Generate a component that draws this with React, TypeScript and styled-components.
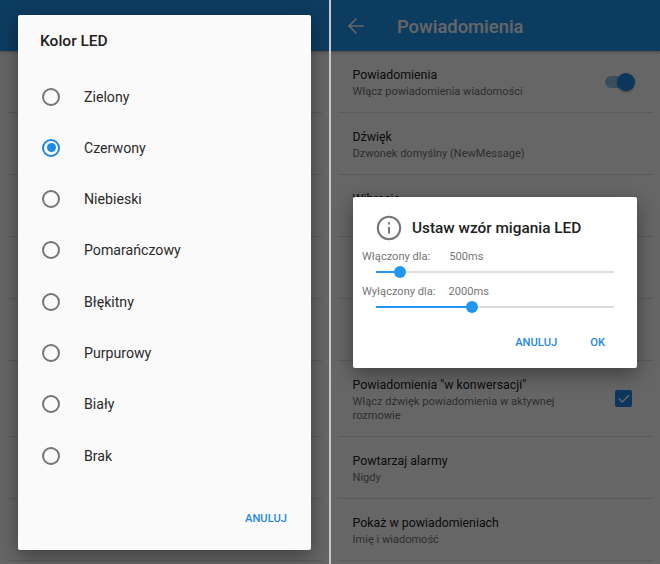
import styled, { createGlobalStyle } from 'styled-components';
import { ArrowLeft, Check } from 'lucide-react';

const GlobalStyle = createGlobalStyle`
    html, body {
        margin: 0;
        padding: 0;
        background: #c8c8c8;
    }
    body {
        font-family: Roboto, "Noto Sans", sans-serif;
    }
`;

const Page = styled.div`
    display: flex;
    gap: 2px;
    width: 660px;
    height: 564px;
    overflow: hidden;
`;

const Screen = styled.div`
    position: relative;
    flex: none;
    width: 329px;
    height: 564px;
    overflow: hidden;
    background: #fff;
`;

const AppBar = styled.header`
    display: flex;
    align-items: center;
    height: 51px;
    padding: 1px 0 0 13px;
    box-sizing: border-box;
    gap: 29px;
    background: #2196f3;
    color: #fff;
    box-shadow: 0 1px 3px rgba(0, 0, 0, 0.3);
`;

const BarTitle = styled.h1`
    margin: 0;
    font-size: 18.4px;
    font-weight: 500;
`;

const Row = styled.div<{ $tall?: boolean }>`
    display: flex;
    align-items: center;
    justify-content: space-between;
    box-sizing: border-box;
    height: ${({ $tall }) => ($tall ? 76 : 62)}px;
    margin: 0 7px;
    padding: 4px 14px 0 14.5px;
    border-bottom: 1px solid #e0e0e0;
`;

const RowText = styled.div`
    display: flex;
    flex-direction: column;
    gap: 2px;
    width: 225px;
`;

const RowTitle = styled.div`
    font-size: 12.35px;
    line-height: 15px;
    color: #212121;
`;

const RowSub = styled.div`
    font-size: 11.05px;
    line-height: 14px;
    color: #757575;
`;

const Toggle = styled.div`
    position: relative;
    top: -2px;
    width: 29px;
    height: 12px;
    margin-right: 5px;
    border-radius: 6px;
    background: #8cc4f2;
    &::after {
        content: '';
        position: absolute;
        top: -3px;
        right: -1px;
        width: 18px;
        height: 18px;
        border-radius: 50%;
        background: #1e88e5;
        box-shadow: 0 1px 2px rgba(0, 0, 0, 0.4);
    }
`;

const CheckBox = styled.div`
    display: flex;
    align-items: center;
    justify-content: center;
    width: 17px;
    height: 17px;
    margin: -4px 7px 0 0;
    border-radius: 2px;
    background: #1e88e5;
    color: #fff;
`;

const Scrim = styled.div`
    position: absolute;
    inset: 0;
    display: flex;
    align-items: center;
    justify-content: center;
    background: rgba(0, 0, 0, 0.6);
`;

const Dialog = styled.div<{ $width: number; $height: number; $surface: string; $nudge?: boolean }>`
    display: flex;
    flex-direction: column;
    box-sizing: border-box;
    width: ${({ $width }) => $width}px;
    height: ${({ $height }) => $height}px;
    margin-right: ${({ $nudge }) => ($nudge ? 1 : 0)}px;
    border-radius: 2px;
    background: ${({ $surface }) => $surface};
    box-shadow: 0 6px 20px rgba(0, 0, 0, 0.4);
`;

const DialogTitle = styled.h2`
    margin: 16px 0 0 22px;
    font-size: 15.5px;
    line-height: 20px;
    font-weight: 500;
    color: #212121;
`;

const RadioList = styled.div`
    display: flex;
    flex-direction: column;
    flex: 1;
    margin-top: 20.4px;
`;

const RadioRow = styled.div`
    display: flex;
    align-items: center;
    flex: none;
    height: 51.3px;
    padding-left: 24px;
    gap: 24px;
    font-size: 14.15px;
    color: #2b2b2b;
`;

const RadioMark = styled.span<{ $on?: boolean }>`
    display: flex;
    align-items: center;
    justify-content: center;
    box-sizing: border-box;
    width: 18px;
    height: 18px;
    border-radius: 50%;
    border: 2px solid ${({ $on }) => ($on ? '#1e88e5' : '#757575')};
    &::after {
        content: '';
        display: ${({ $on }) => ($on ? 'block' : 'none')};
        width: 9px;
        height: 9px;
        border-radius: 50%;
        background: #1e88e5;
    }
`;

const Actions = styled.div`
    display: flex;
    justify-content: flex-end;
    gap: 33px;
    padding: 0 24px 24px 0;
`;

const LedActions = styled(Actions)`
    margin-top: auto;
    padding: 0 32px 18px 0;
`;

const ActionButton = styled.button`
    padding: 0;
    border: 0;
    background: none;
    font-family: inherit;
    font-size: 11.2px;
    line-height: 14px;
    font-weight: 500;
    color: #1e88e5;
`;

const LedHead = styled.div`
    display: flex;
    align-items: center;
    gap: 10px;
    margin: 18px 0 0 23px;
    font-size: 15.35px;
    font-weight: 500;
    color: #212121;
`;

const LedLabel = styled.div<{ $gap: number }>`
    display: flex;
    gap: ${({ $gap }) => $gap}px;
    margin-left: 9px;
    font-size: 11.1px;
    line-height: 14px;
    color: #757575;
`;

const LedGroup = styled.div`
    margin-top: 9px;
    & + & {
        margin-top: 0;
    }
`;

const Slider = styled.div<{ $value: number }>`
    position: relative;
    height: 2px;
    margin: 7px 23px 12.5px;
    background: #dedede;
    &::before {
        content: '';
        position: absolute;
        left: 0;
        top: 0;
        height: 2px;
        width: ${({ $value }) => $value}px;
        background: #2196f3;
    }
    &::after {
        content: '';
        position: absolute;
        top: -5px;
        left: ${({ $value }) => $value - 6}px;
        width: 12px;
        height: 12px;
        border-radius: 50%;
        background: #2196f3;
    }
`;

const InfoIcon = () => (
    <svg width="26" height="26" viewBox="0 0 26 26" fill="none" stroke="#757575" strokeWidth="2">
        <circle cx="13" cy="13" r="11.2" />
        <path d="M13 12v6.5" />
        <path d="M13 7.2v2.2" />
    </svg>
);

const colours = ['Zielony', 'Czerwony', 'Niebieski', 'Pomarańczowy', 'Błękitny', 'Purpurowy', 'Biały', 'Brak'];

type Setting = { title?: string; sub?: string; tall?: boolean; extra?: React.ReactNode };

// the rows behind the LED dialog stay empty, only their dividers show
const settings: Setting[] = [
    { title: 'Powiadomienia', sub: 'Włącz powiadomienia wiadomości', extra: <Toggle /> },
    { title: 'Dźwięk', sub: 'Dzwonek domyślny (NewMessage)' },
    { title: 'Wibracje', sub: 'Domyślne' },
    {},
    {},
    {
        title: 'Powiadomienia "w konwersacji"',
        sub: 'Włącz dźwięk powiadomienia w aktywnej rozmowie',
        tall: true,
        extra: <CheckBox><Check size={14} strokeWidth={2.5} /></CheckBox>,
    },
    { title: 'Powtarzaj alarmy', sub: 'Nigdy' },
    { title: 'Pokaż w powiadomieniach', sub: 'Imię i wiadomość' },
];

export default function App() {
    return (
        <Page>
            <GlobalStyle />
            <Screen>
                <AppBar />
                {settings.map((item, i) => (
                    <Row key={i} $tall={item.tall} />
                ))}
                <Scrim>
                    <Dialog $width={293} $height={535} $surface="#fafafa">
                        <DialogTitle>Kolor LED</DialogTitle>
                        <RadioList>
                            {colours.map((name) => (
                                <RadioRow key={name}>
                                    <RadioMark $on={name === 'Czerwony'} />
                                    {name}
                                </RadioRow>
                            ))}
                        </RadioList>
                        <Actions>
                            <ActionButton>ANULUJ</ActionButton>
                        </Actions>
                    </Dialog>
                </Scrim>
            </Screen>
            <Screen>
                <AppBar>
                    <ArrowLeft size={24} strokeWidth={1.7} />
                    <BarTitle>Powiadomienia</BarTitle>
                </AppBar>
                {settings.map((item, i) => (
                    <Row key={i} $tall={item.tall}>
                        <RowText>
                            <RowTitle>{item.title}</RowTitle>
                            <RowSub>{item.sub}</RowSub>
                        </RowText>
                        {item.extra}
                    </Row>
                ))}
                <Scrim>
                    <Dialog $width={284} $height={171} $surface="#fff" $nudge>
                        <LedHead>
                            <InfoIcon />
                            Ustaw wzór migania LED
                        </LedHead>
                        <LedGroup>
                            <LedLabel $gap={19}><span>Włączony dla:</span><span>500ms</span></LedLabel>
                            <Slider $value={24} />
                        </LedGroup>
                        <LedGroup>
                            <LedLabel $gap={13}><span>Wyłączony dla:</span><span>2000ms</span></LedLabel>
                            <Slider $value={96} />
                        </LedGroup>
                        <LedActions>
                            <ActionButton>ANULUJ</ActionButton>
                            <ActionButton>OK</ActionButton>
                        </LedActions>
                    </Dialog>
                </Scrim>
            </Screen>
        </Page>
    );
}
